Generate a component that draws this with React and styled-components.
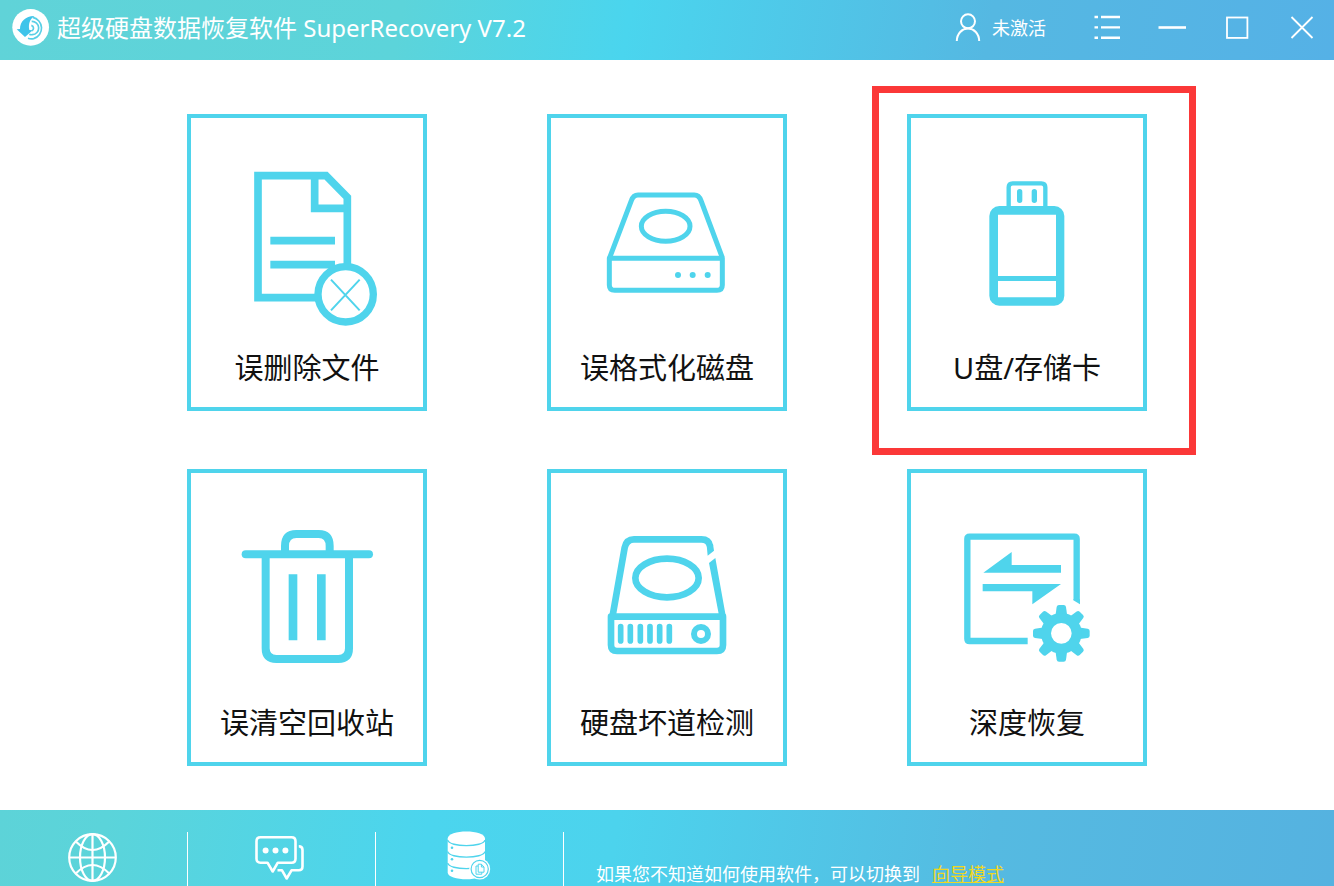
import React from 'react';
import styled, { createGlobalStyle } from 'styled-components';

const CYAN = '#4fd4ec';

const GlobalStyle = createGlobalStyle`
  body {
    margin: 0;
    background-color: white;
    font-family: "Noto Sans", "Noto Sans CJK SC", sans-serif;
  }

  button {
    margin: 0;
    padding: 0;
    border: 0;
    background: none;
    color: inherit;
    font: inherit;
    cursor: pointer;
  }

  svg {
    display: block;
    flex: none;
    overflow: visible;
  }
`;

const Page = styled.div`
  display: flex;
  flex-direction: column;
  min-height: 100vh;
`;

const TitleBar = styled.header`
  display: flex;
  align-items: center;
  height: 60px;
  padding: 0 0 4px 11px;
  box-sizing: border-box;
  color: white;
  background: linear-gradient(
    100deg,
    #60d3d8 0%,
    #5cd4da 30%,
    #4ad5ee 47%,
    #55b8e2 74%,
    #55b1e6 100%
  );
`;

const Title = styled.h1`
  flex: 1;
  margin: 0 0 0 8px;
  font-size: 24px;
  font-weight: 400;
  line-height: 32px;
  white-space: nowrap;
`;

const Account = styled.button`
  display: flex;
  align-items: center;
  gap: 10px;
  margin-right: 28px;
  font-size: 18px;
  line-height: 24px;
`;

const WindowButton = styled.button`
  display: flex;
  align-items: center;
  justify-content: center;
  width: 65px;
  height: 56px;
`;

const Main = styled.main`
  flex: 1;
  display: grid;
  grid-template-columns: repeat(3, 240px);
  grid-auto-rows: max-content;
  justify-content: center;
  gap: 58px 120px;
  padding: 54px 0 44px;
`;

const Cell = styled.div`
  position: relative;
`;

const Card = styled.button`
  display: flex;
  flex-direction: column;
  align-items: center;
  width: 100%;
  height: 297px;
  border: 4px solid ${CYAN};
  background-color: white;
  box-sizing: border-box;
`;

const CardLabel = styled.span`
  color: #111;
  font-size: 29px;
  font-weight: 400;
  line-height: 68px;
  white-space: nowrap;
`;

const Highlight = styled.div`
  position: absolute;
  top: -28px;
  right: -49px;
  bottom: -44px;
  left: -35px;
  border: 7px solid #fb3838;
  pointer-events: none;
`;

const Footer = styled.footer`
  display: flex;
  min-height: 76px;
  padding-top: 22px;
  box-sizing: border-box;
  color: white;
  background: linear-gradient(
    100deg,
    #5dd3d8 0%,
    #5bd4da 8%,
    #4bd5ee 32%,
    #4cd3ed 46%,
    #55bae1 74%,
    #55b2e0 100%
  );
`;

const FooterButton = styled.button`
  display: flex;
  justify-content: center;
  width: 188px;
  border-right: 1px solid white;
`;

const Hint = styled.p`
  display: flex;
  gap: 12px;
  margin: 30px 0 0 32px;
  font-size: 18px;
  line-height: 24px;
  white-space: nowrap;
`;

const HintLink = styled.a`
  color: #f0d722;
  text-decoration: underline;
`;

const Logo = () => (
  <svg width="38" height="38" viewBox="33 27 114 114" fill="none">
    <circle cx="92" cy="82" r="55" fill="white" />
    <path
      d="M50 88 L60 87 C60 64 78 47 104 48 C90 56 84 72 88 90 L98 91 L75 111 Z"
      fill="#3fc4ea"
    />
    <path
      d="M98 52 A33 33 0 0 1 101 116 Q92 118 84 115"
      stroke="#58cfe6"
      strokeWidth="5"
    />
    <path d="M95 64 A20 20 0 0 1 97 104 Q92 105 88 103" stroke="#58cfe6" strokeWidth="5" />
    <path d="M94 76 A9 9 0 0 1 95 93" stroke="#58cfe6" strokeWidth="5" />
  </svg>
);

const WindowIcon = ({ children, ...rest }) => (
  <svg
    width="28"
    height="28"
    viewBox="0 0 28 28"
    fill="none"
    stroke="white"
    strokeWidth="2"
    {...rest}
  >
    {children}
  </svg>
);

const UserIcon = () => (
  <WindowIcon>
    <circle cx="14" cy="7.3" r="7" />
    <path d="M2.8 27 C3 19.5 8 14.6 14 14.6 S25 19.5 25.2 27" />
  </WindowIcon>
);

const MenuIcon = () => (
  <WindowIcon strokeWidth="2.4">
    <path d="M1.5 3 H5 M8 3 H27 M1.5 13.4 H5 M8 13.4 H27 M1.5 23.8 H5 M8 23.8 H27" />
  </WindowIcon>
);

const MinimizeIcon = () => (
  <WindowIcon strokeWidth="2.6">
    <path d="M0.5 13.5 H28" />
  </WindowIcon>
);

const MaximizeIcon = () => (
  <WindowIcon strokeWidth="1.8">
    <rect x="4" y="3.5" width="20.4" height="20.4" />
  </WindowIcon>
);

const CloseIcon = () => (
  <WindowIcon strokeWidth="1.8">
    <path d="M3.5 3 L24.5 24 M24.5 3 L3.5 24" />
  </WindowIcon>
);

// Card drawings are made on a 3x grid of the space above the label.
const CardIcon = ({ children, ...rest }) => (
  <svg
    width="232"
    height="216"
    viewBox="33 39 696 648"
    fill="none"
    stroke={CYAN}
    {...rest}
  >
    {children}
  </svg>
);

const DeletedFileIcon = () => (
  <CardIcon strokeWidth="23">
    <path d="M502 480 V277 L438 212 H234 V578 H410" />
    <path d="M404 212 V310 H502" />
    <path d="M271 407 H465 M271 479 H465" />
    <circle cx="497" cy="568" r="83" fill="white" strokeWidth="22" />
    <path d="M453 524 L539 616 M539 524 L453 616" strokeWidth="6" />
  </CardIcon>
);

const FormattedDiskIcon = () => (
  <CardIcon strokeWidth="15">
    <path d="M209 458 L274 287 Q280 270 294 270 H463 Q477 270 483 287 L547 458" />
    <path d="M208 460 H547 V540 Q547 556 531 556 H224 Q208 556 208 540 Z" strokeLinejoin="round" />
    <ellipse cx="377" cy="364" rx="73" ry="45" />
    <g fill={CYAN} stroke="none">
      <circle cx="414" cy="510" r="9" />
      <circle cx="458" cy="510" r="9" />
      <circle cx="503" cy="510" r="9" />
    </g>
  </CardIcon>
);

const UsbIcon = () => (
  <CardIcon viewBox="138 114 696 648">
    <path d="M431 385 V322 Q431 310 443 310 H529 Q541 310 541 322 V385" strokeWidth="13" />
    <path d="M464 335 V361 M508 335 V361" strokeWidth="16" strokeLinecap="round" />
    <rect x="373" y="378" width="225" height="299" rx="30" fill={CYAN} stroke="none" />
    <path d="M399 404 H573 V588 H399 Z M399 603 H573 V652 H399 Z" fill="white" stroke="none" />
  </CardIcon>
);

const RecycleBinIcon = () => (
  <CardIcon strokeWidth="24">
    <path d="M197 283 H567" strokeLinecap="round" />
    <path d="M315 283 V258 Q315 222 349 222 H416 Q449 222 449 258 V283" />
    <path d="M257 283 V565 Q257 597 289 597 H475 Q507 597 507 565 V283" />
    <path d="M339 343 V541 M424 343 V541" strokeWidth="26" />
  </CardIcon>
);

const BadSectorIcon = () => (
  <CardIcon strokeWidth="20">
    <path d="M217 472 L254 263 Q259 238 282 238 H484 Q507 238 510 258" />
    <path
      d="M500 256 L519 252 L522 272 L503 287 Z M526 294 L558 472 H538 L507 309 Z"
      fill={CYAN}
      stroke="none"
    />
    <path d="M213 470 H549 V555 Q549 573 531 573 H231 Q213 573 213 555 Z" strokeLinejoin="round" />
    <ellipse cx="381" cy="354" rx="95" ry="58" />
    <path
      d="M242 500 V543 M271 500 V543 M301 500 V543 M330 500 V543 M359 500 V543 M388 500 V543"
      strokeWidth="17"
      strokeLinecap="round"
    />
    <circle cx="483" cy="522" r="21" strokeWidth="18" />
  </CardIcon>
);

const DeepRecoveryIcon = () => (
  <CardIcon strokeWidth="19">
    <path d="M383 543 H209 Q202 543 202 536 V237 Q202 230 209 230 H523 Q530 230 530 237 V420" />
    <g fill={CYAN} stroke="none">
      <path d="M520 418 H540 V433 L520 421 Z" />
      <path d="M250 338 L335 276 V315 H483 V338 Z" />
      <path d="M248 372 H483 L397 433 V394 H248 Z" />
      {[0, 45, 90, 135, 180, 225, 270, 315].map(angle => (
        <path
          key={angle}
          d="M-18 -50 L-14 -79 Q-13 -85 -7 -85 H7 Q13 -85 14 -79 L18 -50 Z"
          transform={`translate(484 520) rotate(${angle})`}
        />
      ))}
    </g>
    <circle cx="484" cy="520" r="46" strokeWidth="30" />
  </CardIcon>
);

const FooterIcon = ({ children, ...rest }) => (
  <svg
    width="51"
    height="51"
    viewBox="0 0 51 51"
    fill="none"
    stroke="white"
    strokeWidth="2.2"
    {...rest}
  >
    {children}
  </svg>
);

const GlobeIcon = () => (
  <FooterIcon>
    <circle cx="24.5" cy="25.5" r="23.3" />
    <ellipse cx="24.5" cy="25.5" rx="12.5" ry="23.3" />
    <path d="M24.5 2 V49 M1 25.5 H48" />
    <path d="M7.8 9.5 Q24.5 26.5 41.2 9.5 M7.8 41.5 Q24.5 24.5 41.2 41.5" />
  </FooterIcon>
);

const ChatIcon = () => (
  <FooterIcon strokeWidth="2.6" strokeLinejoin="round">
    <path d="M4.5 5.3 H35.5 Q39.5 5.3 39.5 9.3 V26.7 Q39.5 30.7 35.5 30.7 H21.8 L16.7 39.5 L11.5 30.7 H4.5 Q0.5 30.7 0.5 26.7 V9.3 Q0.5 5.3 4.5 5.3 Z" />
    <path d="M42.8 14.2 Q46.5 14.2 46.5 18 V34.5 Q46.5 38.3 42.7 38.3 H35.5 L30.7 46.5 L26 38.3 H21.5" />
    <g fill="white" stroke="none">
      <circle cx="9.6" cy="18.4" r="3" />
      <circle cx="19.5" cy="18.4" r="3" />
      <circle cx="29.4" cy="18.4" r="3" />
    </g>
  </FooterIcon>
);

const DatabaseIcon = () => (
  <FooterIcon stroke={CYAN} strokeWidth="1.4">
    <path
      d="M3.7 6.5 C3.7 -3 41 -3 41 6.5 V40.5 C41 49.5 3.7 49.5 3.7 40.5 Z"
      fill="white"
      stroke="none"
    />
    <path d="M3.7 8 C5 15.5 39.7 15.5 41 8" />
    <path d="M3.7 19.5 C5 27 39.7 27 41 19.5" />
    <path d="M3.7 31 C5 38.5 39.7 38.5 41 31" />
    <g fill={CYAN} stroke="none">
      <circle cx="8" cy="15.7" r="1.3" />
      <circle cx="8" cy="27.2" r="1.3" />
      <circle cx="8" cy="38.7" r="1.3" />
    </g>
    <circle cx="35.7" cy="37" r="10.5" fill="white" stroke="none" />
    <circle cx="35.7" cy="37" r="8.6" strokeWidth="1.2" />
    <path d="M34.2 32.2 H37.4 L40 35 V40.2 H34.2 Z M37.4 32.2 V35 H40 M34.2 34 H32 V42.2 H37.8 V40.2" strokeWidth="1" />
  </FooterIcon>
);

const cards = [
  { label: '误删除文件', icon: <DeletedFileIcon /> },
  { label: '误格式化磁盘', icon: <FormattedDiskIcon /> },
  { label: 'U盘/存储卡', icon: <UsbIcon />, highlighted: true },
  { label: '误清空回收站', icon: <RecycleBinIcon /> },
  { label: '硬盘坏道检测', icon: <BadSectorIcon /> },
  { label: '深度恢复', icon: <DeepRecoveryIcon /> },
];

export default function App() {
  return (
    <Page lang="zh-CN">
      <GlobalStyle />
      <TitleBar>
        <Logo />
        <Title>超级硬盘数据恢复软件 SuperRecovery V7.2</Title>
        <Account>
          <UserIcon />
          未激活
        </Account>
        <WindowButton>
          <MenuIcon />
        </WindowButton>
        <WindowButton>
          <MinimizeIcon />
        </WindowButton>
        <WindowButton>
          <MaximizeIcon />
        </WindowButton>
        <WindowButton>
          <CloseIcon />
        </WindowButton>
      </TitleBar>
      <Main>
        {cards.map(({ label, icon, highlighted }) => (
          <Cell key={label}>
            <Card>
              {icon}
              <CardLabel>{label}</CardLabel>
            </Card>
            {highlighted && <Highlight />}
          </Cell>
        ))}
      </Main>
      <Footer>
        <FooterButton>
          <GlobeIcon />
        </FooterButton>
        <FooterButton>
          <ChatIcon />
        </FooterButton>
        <FooterButton>
          <DatabaseIcon />
        </FooterButton>
        <Hint>
          如果您不知道如何使用软件，可以切换到
          <HintLink href="#guide">向导模式</HintLink>
        </Hint>
      </Footer>
    </Page>
  );
}
